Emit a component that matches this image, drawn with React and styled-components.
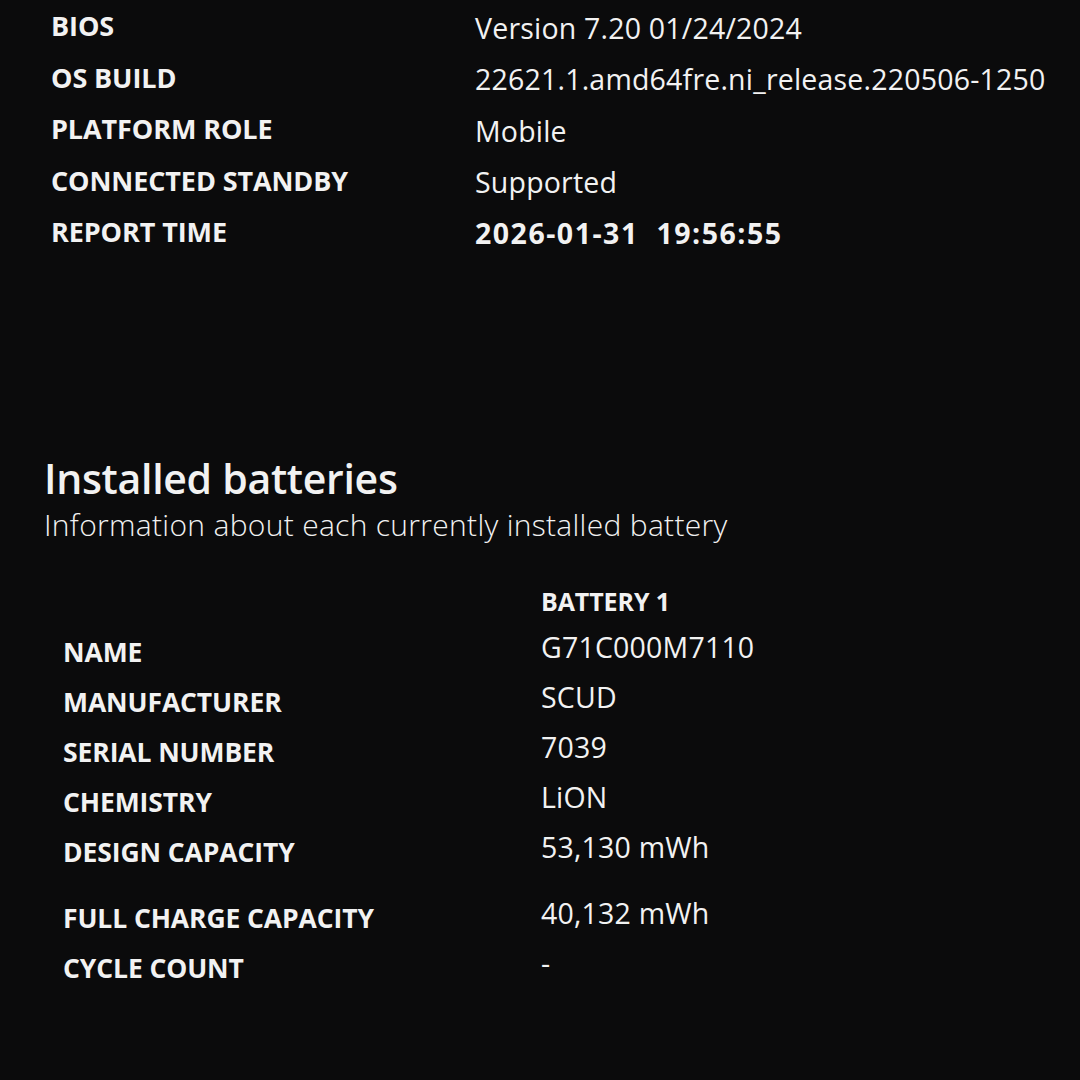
import React from "react";
import styled, { createGlobalStyle } from "styled-components";

const GlobalStyle = createGlobalStyle`
  html, body {
    margin: 0;
    padding: 0;
    background-color: #0b0b0c;
  }
  body {
    font-family: "Open Sans", "Noto Sans", "Liberation Sans", sans-serif;
    color: #f2f2f2;
  }
`;

const Page = styled.div`
  width: 1080px;
  height: 1080px;
  overflow: hidden;
  background-color: #0b0b0c;
`;

const InfoTable = styled.div`
  display: grid;
  grid-template-columns: 424px auto;
  grid-auto-rows: 51.5px;
  align-items: center;
  padding-left: 51px;
`;

const Label = styled.div`
  font-size: ${(p) => p.size || 27}px;
  font-weight: 700;
  letter-spacing: -0.1px;
  white-space: nowrap;
`;

const Value = styled.div`
  font-size: 28.5px;
  font-weight: ${(p) => (p.bold ? 700 : 400)};
  letter-spacing: ${(p) => (p.bold ? "1.5px" : "0.2px")};
  white-space: pre;
  transform: translateY(${(p) => p.lift || 0}px);
`;

const Section = styled.div`
  margin-top: 196px;
  padding-left: 44px;
`;

const Heading = styled.h1`
  margin: 0;
  font-size: 41px;
  font-weight: 600;
  letter-spacing: -0.3px;
  line-height: 48px;
`;

const Subtitle = styled.p`
  margin: 0;
  font-size: 30px;
  font-weight: 300;
  letter-spacing: 0.3px;
  line-height: 45px;
`;

const BatteryTable = styled.div`
  display: flex;
  flex-direction: column;
  margin-top: 28px;
  padding-left: 63px;
`;

const BatteryRow = styled.div`
  display: grid;
  grid-template-columns: 478px auto;
  align-items: center;
  height: ${(p) => (p.head ? 52 : 50)}px;
  margin-top: ${(p) => (p.spaced ? 16 : 0)}px;
`;

const systemRows = [
  ["BIOS", "Version 7.20 01/24/2024"],
  ["OS BUILD", "22621.1.amd64fre.ni_release.220506-1250"],
  ["PLATFORM ROLE", "Mobile"],
  ["CONNECTED STANDBY", "Supported"],
];

const batteryRows = [
  { label: "NAME", value: "G71C000M7110" },
  { label: "MANUFACTURER", value: "SCUD" },
  { label: "SERIAL NUMBER", value: "7039" },
  { label: "CHEMISTRY", value: "LiON" },
  { label: "DESIGN CAPACITY", value: "53,130 mWh" },
  { label: "FULL CHARGE CAPACITY", value: "40,132 mWh", spaced: true },
  { label: "CYCLE COUNT", value: "-" },
];

const App = () => {
  return (
    <Page>
      <GlobalStyle />
      <InfoTable>
        {systemRows.map(([label, value]) => (
          <React.Fragment key={label}>
            <Label>{label}</Label>
            <Value lift={2}>{value}</Value>
          </React.Fragment>
        ))}
        <Label>REPORT TIME</Label>
        <Value bold lift={1}>
          {"2026-01-31  19:56:55"}
        </Value>
      </InfoTable>

      <Section>
        <Heading>Installed batteries</Heading>
        <Subtitle>Information about each currently installed battery</Subtitle>
      </Section>

      <BatteryTable>
        <BatteryRow head>
          <div />
          <Label size={25}>BATTERY 1</Label>
        </BatteryRow>
        {batteryRows.map((row) => (
          <BatteryRow key={row.label} spaced={row.spaced}>
            <Label size={26.5}>{row.label}</Label>
            <Value lift={-5}>{row.value}</Value>
          </BatteryRow>
        ))}
      </BatteryTable>
    </Page>
  );
};

export default App;
